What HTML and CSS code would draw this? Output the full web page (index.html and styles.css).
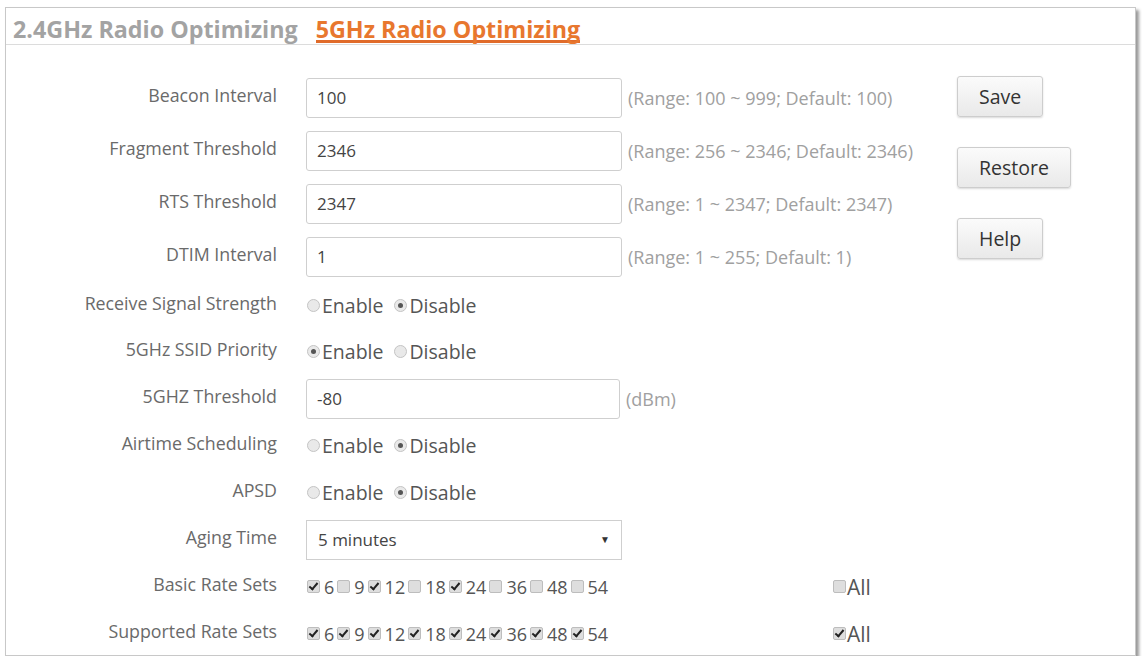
FILE: index.html
```html
<!DOCTYPE html>
<html lang="en">
<head>
    <meta charset="UTF-8">
    <title>5GHz Radio Optimizing</title>
    <link rel="stylesheet" href="styles.css">
</head>
<body>
    <div class="panel">
        <div class="tabs">
            <span class="tab">2.4GHz Radio Optimizing</span>
            <span class="tab active">5GHz Radio Optimizing</span>
        </div>
        <div class="content">
            <div class="form">
                <div class="row row-input">
                    <label class="label">Beacon Interval</label>
                    <input class="text" type="text" value="100">
                    <span class="hint">(Range: 100 ~ 999; Default: 100)</span>
                </div>
                <div class="row row-input">
                    <label class="label">Fragment Threshold</label>
                    <input class="text" type="text" value="2346">
                    <span class="hint">(Range: 256 ~ 2346; Default: 2346)</span>
                </div>
                <div class="row row-input">
                    <label class="label">RTS Threshold</label>
                    <input class="text" type="text" value="2347">
                    <span class="hint">(Range: 1 ~ 2347; Default: 2347)</span>
                </div>
                <div class="row row-input">
                    <label class="label">DTIM Interval</label>
                    <input class="text" type="text" value="1">
                    <span class="hint">(Range: 1 ~ 255; Default: 1)</span>
                </div>
                <div class="row row-first">
                    <label class="label">Receive Signal Strength</label>
                    <span class="choice"><span class="radio"></span>Enable</span>
                    <span class="choice"><span class="radio on"></span>Disable</span>
                </div>
                <div class="row">
                    <label class="label">5GHz SSID Priority</label>
                    <span class="choice"><span class="radio on"></span>Enable</span>
                    <span class="choice"><span class="radio"></span>Disable</span>
                </div>
                <div class="row">
                    <label class="label">5GHZ Threshold</label>
                    <input class="text text-short" type="text" value="-80">
                    <span class="hint">(dBm)</span>
                </div>
                <div class="row">
                    <label class="label">Airtime Scheduling</label>
                    <span class="choice"><span class="radio"></span>Enable</span>
                    <span class="choice"><span class="radio on"></span>Disable</span>
                </div>
                <div class="row">
                    <label class="label">APSD</label>
                    <span class="choice"><span class="radio"></span>Enable</span>
                    <span class="choice"><span class="radio on"></span>Disable</span>
                </div>
                <div class="row">
                    <label class="label">Aging Time</label>
                    <div class="select-wrap">
                        <select class="select">
                            <option>5 minutes</option>
                        </select>
                        <span class="arrow">&#9660;</span>
                    </div>
                </div>
                <div class="row">
                    <label class="label">Basic Rate Sets</label>
                    <div class="rates">
                        <span class="rate"><span class="check on"></span>6</span>
                        <span class="rate"><span class="check"></span>9</span>
                        <span class="rate"><span class="check on"></span>12</span>
                        <span class="rate"><span class="check"></span>18</span>
                        <span class="rate"><span class="check on"></span>24</span>
                        <span class="rate"><span class="check"></span>36</span>
                        <span class="rate"><span class="check"></span>48</span>
                        <span class="rate"><span class="check"></span>54</span>
                    </div>
                    <span class="rate rate-all"><span class="check"></span>All</span>
                </div>
                <div class="row">
                    <label class="label">Supported Rate Sets</label>
                    <div class="rates">
                        <span class="rate"><span class="check on"></span>6</span>
                        <span class="rate"><span class="check on"></span>9</span>
                        <span class="rate"><span class="check on"></span>12</span>
                        <span class="rate"><span class="check on"></span>18</span>
                        <span class="rate"><span class="check on"></span>24</span>
                        <span class="rate"><span class="check on"></span>36</span>
                        <span class="rate"><span class="check on"></span>48</span>
                        <span class="rate"><span class="check on"></span>54</span>
                    </div>
                    <span class="rate rate-all"><span class="check on"></span>All</span>
                </div>
            </div>
            <div class="actions">
                <button class="btn">Save</button>
                <button class="btn">Restore</button>
                <button class="btn">Help</button>
            </div>
        </div>
    </div>
</body>
</html>
```

FILE: styles.css
```css
body {
    margin: 0;
    background: #fff;
    font-family: "Open Sans", Arial, sans-serif;
}
.panel {
    margin: 7px 0 0 5px;
    width: 1131px;
    height: 649px;
    box-sizing: border-box;
    border: 1px solid #c8c8c8;
    box-shadow: 3px 3px 3px rgba(0, 0, 0, 0.4);
    background: #fff;
}
.tabs {
    display: flex;
    gap: 18px;
    height: 36px;
    padding-left: 7px;
    border-bottom: 1px solid #dcdcdc;
}
.tab {
    font-size: 23.3px;
    font-weight: bold;
    color: #a3a3a3;
    line-height: 24px;
    padding-top: 9px;
    height: 23px;
}
.tab.active {
    color: #e8772e;
    border-bottom: 3px solid #e06b2a;
}
.content {
    display: flex;
}
.form {
    width: 951px;
    padding-top: 26px;
}
.row {
    display: flex;
    align-items: center;
    height: 47px;
}
.row-input {
    height: 53px;
}
.row-first {
    height: 45px;
}
.label {
    width: 271px;
    margin-right: 29px;
    padding-bottom: 5px;
    text-align: right;
    font-size: 17.8px;
    color: #6a6a6a;
}
.text {
    width: 316px;
    height: 40px;
    box-sizing: border-box;
    border: 1px solid #cfcfcf;
    border-radius: 3px;
    padding: 0 10px;
    font-family: "Open Sans", Arial, sans-serif;
    font-size: 17px;
    color: #444;
}
.text-short {
    width: 314px;
}
.hint {
    margin-left: 6px;
    font-size: 18px;
    color: #a0a0a0;
}
.choice {
    display: flex;
    align-items: center;
    font-size: 19.5px;
    color: #555;
    margin-left: 1px;
    margin-right: 10px;
}
.radio {
    width: 11px;
    height: 11px;
    border: 1px solid #c4c4c4;
    border-radius: 50%;
    background: #e9e9e9;
    margin-right: 2px;
    position: relative;
}
.radio.on::after {
    content: "";
    position: absolute;
    left: 3px;
    top: 3px;
    width: 5px;
    height: 5px;
    border-radius: 50%;
    background: #555;
}
.select-wrap {
    position: relative;
}
.select {
    width: 316px;
    height: 40px;
    border: 1px solid #cfcfcf;
    border-radius: 0;
    background: #fff;
    appearance: none;
    -webkit-appearance: none;
    padding: 0 11px;
    font-family: "Open Sans", Arial, sans-serif;
    font-size: 17px;
    color: #444;
}
.arrow {
    position: absolute;
    right: 12px;
    top: 12px;
    font-size: 10px;
    color: #333;
}
.rates {
    display: flex;
    width: 527px;
    margin-left: 1px;
}
.rate {
    display: flex;
    align-items: center;
    font-size: 18px;
    color: #555;
    margin-right: 3px;
}
.check {
    width: 11px;
    height: 11px;
    border: 1px solid #bdbdbd;
    border-radius: 2px;
    background: #dedede;
    margin-right: 4px;
    position: relative;
}
.check.on::after {
    content: "";
    position: absolute;
    left: 3px;
    top: 0;
    width: 3px;
    height: 7px;
    border-right: 2px solid #222;
    border-bottom: 2px solid #222;
    transform: rotate(40deg);
}
.rate-all {
    margin-left: -1px;
    font-size: 21px;
}
.rate-all .check {
    margin-right: 1px;
}
.actions {
    display: flex;
    flex-direction: column;
    align-items: flex-start;
    padding-top: 31px;
}
.btn {
    min-width: 86px;
    height: 41px;
    padding: 0 21px;
    margin-bottom: 30px;
    border: 1px solid #cdcdcd;
    border-radius: 3px;
    background: linear-gradient(#fbfbfb, #e9e9e9);
    box-shadow: 0 1px 2px rgba(0, 0, 0, 0.15);
    font-family: "Open Sans", Arial, sans-serif;
    font-size: 19.5px;
    color: #333;
}
```
